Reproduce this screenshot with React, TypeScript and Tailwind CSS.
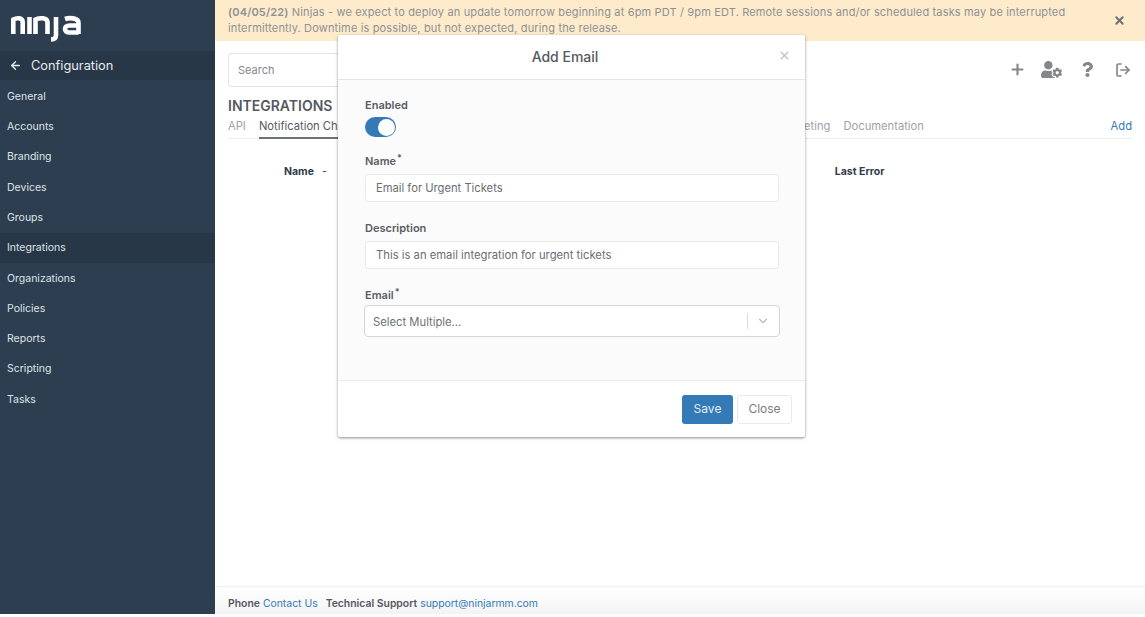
import { ArrowLeft, ChevronDown, LogOut, Plus, X } from 'lucide-react';
import { FaQuestion, FaUserCog } from 'react-icons/fa';

const navItems = ['General', 'Accounts', 'Branding', 'Devices', 'Groups', 'Integrations', 'Organizations', 'Policies', 'Reports', 'Scripting', 'Tasks'];

function NinjaLogo() {
  return (
    <svg width="70" height="28" viewBox="0 0 70 28" fill="none" stroke="#ffffff" strokeWidth="4.6">
      <path d="M2.300 20V5.500C6 3.500 11.500 3.500 11.700 8V20" />
      <path d="M18.500 3V20" />
      <path d="M24.500 20V5.500C29 3.500 36 3.500 36.500 8V20" />
      <path d="M45 3V21C45 24.500 43 25.500 40 25.500" />
      <path d="M54 5C58 3.500 67.500 3.500 67.500 9V20" />
      <path d="M67.500 11.500H58.500C52.500 11.500 52.500 18.500 58.500 18.500H67.500" />
    </svg>
  );
}

function Sidebar() {
  return (
    <aside className="w-[215px] shrink-0 bg-[#2c3e50] text-white">
      <div className="flex h-[51px] items-start pl-[11px] pt-[14px]">
        <NinjaLogo />
      </div>
      <div className="flex h-[29px] items-center gap-[9px] bg-[#273748] pl-[9px] text-[12.800px] text-[#e8ebee]">
        <ArrowLeft size={13} strokeWidth={2.5} />
        <span>Configuration</span>
      </div>
      <nav className="pt-[1.500px]">
        {navItems.map((item) => (
          <div
            key={item}
            className={`flex h-[30.300px] items-center pl-[7px] text-[10.500px] text-[#dfe3e7] ${item === 'Integrations' ? 'bg-[#273748]' : ''}`}
          >
            {item}
          </div>
        ))}
      </nav>
    </aside>
  );
}

function Label({ text, required }: { text: string; required?: boolean }) {
  return (
    <div className="text-[11px] leading-[14px] font-semibold text-[#595d63]">
      {text}
      {required && <sup className="ml-[1px] text-[9px]">*</sup>}
    </div>
  );
}

function AddEmailModal() {
  return (
    <div className="absolute top-[35px] left-[338px] flex h-[402px] w-[467px] flex-col rounded-[2px] bg-white shadow-[0_1px_3px_rgba(0,0,0,0.45)]">
      <div className="relative flex h-[45px] shrink-0 items-center justify-center border-b border-[#e4e5e7] pr-[13px] pb-[2px] text-[14px] font-medium text-[#55595f]">
        Add Email
        <X size={13} strokeWidth={3} className="absolute top-[14px] right-[14px] text-[#c4c6c9]" />
      </div>
      <div className="flex h-[300px] shrink-0 flex-col bg-[#fbfbfc] pl-[27px] pr-[26px] pt-[18px]">
        <Label text="Enabled" />
        <div className="mt-[5px] flex h-[20px] w-[31px] items-center justify-end rounded-full bg-[#337ab7] pr-[1px]">
          <div className="h-[17px] w-[17px] rounded-full bg-white" />
        </div>
        <div className="mt-[17px]">
          <Label text="Name" required />
        </div>
        <div className="mt-[6px] flex h-[28px] items-center rounded-[3px] border border-[#e9eaec] bg-white pl-[10px] pt-[1px] text-[11.200px] text-[#696d72]">
          Email for Urgent Tickets
        </div>
        <div className="mt-[19px]">
          <Label text="Description" />
        </div>
        <div className="mt-[6px] flex h-[28px] items-center rounded-[3px] border border-[#e9eaec] bg-white pl-[10px] text-[11.250px] text-[#696d72]">
          This is an email integration for urgent tickets
        </div>
        <div className="mt-[19px]">
          <Label text="Email" required />
        </div>
        <div className="-mx-[1px] mt-[3px] flex h-[32px] items-center rounded-[4px] border border-[#d4d5d8] bg-white pl-[8px] text-[11.250px] text-[#6d7176]">
          <span className="flex-1 pt-[2px]">Select Multiple...</span>
          <span className="h-[16px] w-px bg-[#d8d9db]" />
          <ChevronDown size={14} className="ml-[8px] mr-[9px] text-[#b5b7ba]" />
        </div>
      </div>
      <div className="flex flex-1 items-center justify-end gap-[4px] border-t border-[#ececee] pr-[13px]">
        <button className="flex h-[29px] w-[51px] items-center justify-center rounded-[3px] bg-[#337ab7] text-[12px] text-[#e6eef5]">Save</button>
        <button className="flex h-[29px] w-[55px] items-center justify-center rounded-[3px] border border-[#e9eaec] bg-white text-[12px] text-[#797c80]">Close</button>
      </div>
    </div>
  );
}

export default function App() {
  return (
    <div className="relative h-[617px] w-[1145px] overflow-hidden bg-white font-['Inter',sans-serif]">
      <div className="flex h-[614px]">
        <Sidebar />
        <main className="flex min-w-0 flex-1 flex-col">
          <div className="flex h-[41px] shrink-0 bg-[#fdebcb] pl-[13px] pr-[19px] pt-[5px] text-[11px] leading-[15.500px] tracking-[0.15px] text-[#8f9193]">
            <p className="w-[850px]">
              <b className="font-semibold">(04/05/22)</b> Ninjas - we expect to deploy an update tomorrow beginning at 6pm PDT / 9pm EDT. Remote sessions and/or scheduled tasks may be interrupted intermittently. Downtime is possible, but not expected, during the release.
            </p>
            <X size={13} strokeWidth={3.5} className="mt-[9px] ml-auto text-[#6d7074]" />
          </div>
          <div className="flex h-[46px] shrink-0 items-end justify-between pl-[13px] pr-[14px]">
            <div className="flex h-[34px] w-[300px] items-center rounded-[3px] border border-[#e2e3e5] pl-[9px] text-[11px] text-[#85888c]">Search</div>
            <div className="mb-[7px] flex items-center text-[#848689]">
              <Plus size={17} strokeWidth={3} />
              <FaUserCog size={21} className="ml-[15px]" />
              <FaQuestion size={15} className="ml-[18px]" />
              <LogOut size={16} strokeWidth={2.5} className="ml-[20px]" />
            </div>
          </div>
          <h1 className="mt-[10px] pl-[13px] text-[14px] leading-[17px] font-semibold text-[#55595f]">INTEGRATIONS</h1>
          <div className="mx-[13px] mt-[3px] flex h-[22px] shrink-0 justify-between border-b border-[#eceded] text-[11.200px] leading-[18px] whitespace-nowrap text-[#a0a2a5]">
            <div className="flex">
              <span>API</span>
              <span className="ml-[13px] h-[22px] w-[200px] border-b-2 border-[#6d7074] text-[#55595f]">Notification Channels</span>
              <span className="ml-[323px]">Ticketing</span>
              <span className="ml-[13px]">Documentation</span>
            </div>
            <span className="text-[#337ab7]">Add</span>
          </div>
          <div className="mt-[26px] flex pl-[69px] text-[10.500px] leading-[14px] font-bold text-[#2f3b4a]">
            <span>Name</span>
            <span className="ml-[8px] font-normal">-</span>
            <span className="ml-[508px]">Last Error</span>
          </div>
          <footer className="mt-auto flex h-[28px] shrink-0 items-center border-t border-[#f0f0f1] bg-gradient-to-b from-white to-[#f3f3f4] pl-[13px] pt-[6px] text-[10.400px] text-[#55595f]">
            <b className="font-semibold">Phone</b>
            <span className="ml-[3px] text-[#337ab7]">Contact Us</span>
            <b className="ml-[8px] font-semibold">Technical Support</b>
            <span className="ml-[3px] text-[#337ab7]">support@ninjarmm.com</span>
          </footer>
        </main>
      </div>
      <AddEmailModal />
    </div>
  );
}
